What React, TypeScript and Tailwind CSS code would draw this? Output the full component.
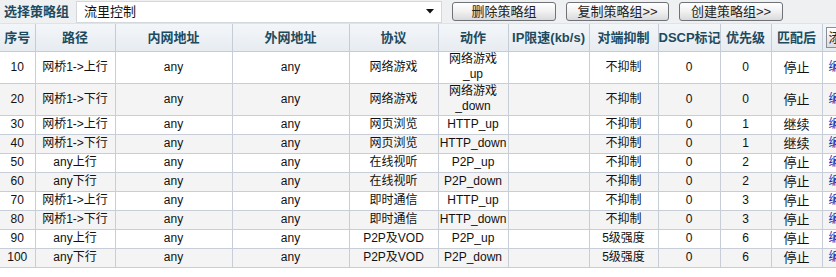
import React from "react";

type Row = {
  id: string;
  path: string;
  proto: string;
  action: string[];
  peer: string;
  dscp: string;
  pri: string;
  after: string;
};

const rows: Row[] = [
  { id: "10", path: "网桥1->上行", proto: "网络游戏", action: ["网络游戏", "_up"], peer: "不抑制", dscp: "0", pri: "0", after: "停止" },
  { id: "20", path: "网桥1->下行", proto: "网络游戏", action: ["网络游戏", "_down"], peer: "不抑制", dscp: "0", pri: "0", after: "停止" },
  { id: "30", path: "网桥1->上行", proto: "网页浏览", action: ["HTTP_up"], peer: "不抑制", dscp: "0", pri: "1", after: "继续" },
  { id: "40", path: "网桥1->下行", proto: "网页浏览", action: ["HTTP_down"], peer: "不抑制", dscp: "0", pri: "1", after: "继续" },
  { id: "50", path: "any上行", proto: "在线视听", action: ["P2P_up"], peer: "不抑制", dscp: "0", pri: "2", after: "停止" },
  { id: "60", path: "any下行", proto: "在线视听", action: ["P2P_down"], peer: "不抑制", dscp: "0", pri: "2", after: "停止" },
  { id: "70", path: "网桥1->上行", proto: "即时通信", action: ["HTTP_up"], peer: "不抑制", dscp: "0", pri: "3", after: "停止" },
  { id: "80", path: "网桥1->下行", proto: "即时通信", action: ["HTTP_down"], peer: "不抑制", dscp: "0", pri: "3", after: "停止" },
  { id: "90", path: "any上行", proto: "P2P及VOD", action: ["P2P_up"], peer: "5级强度", dscp: "0", pri: "6", after: "停止" },
  { id: "100", path: "any下行", proto: "P2P及VOD", action: ["P2P_down"], peer: "5级强度", dscp: "0", pri: "6", after: "停止" },
];

const widths = [35, 80, 117, 117, 89, 70, 81, 69, 62, 51, 51, 60];
const heads = ["序号", "路径", "内网地址", "外网地址", "协议", "动作", "IP限速(kb/s)", "对端抑制", "DSCP标记", "优先级", "匹配后"];

function Btn({ children, w }: { children: React.ReactNode; w: string }) {
  return (
    <button
      className={`${w} h-[19px] rounded-[3px] border border-[#6f7378] bg-gradient-to-b from-[#ffffff] via-[#f1f1f1] to-[#d9dadc] text-[13px] leading-[17px] text-[#222] text-center`}
    >
      {children}
    </button>
  );
}

export default function App() {
  const font = { fontFamily: '"Liberation Sans", "Noto Sans CJK SC", sans-serif' };
  return (
    <div className="w-[836px] h-[277px] overflow-hidden bg-white" style={font}>
      <div className="h-[24px] bg-[#eef0f2] border-b border-[#dfe3e7] flex items-center">
        <div className="w-[76px] pl-[4px] text-[13px] font-bold text-[#1e4a5e] leading-none">选择策略组</div>
        <div className="w-[366px] h-[22px] bg-white border border-[#d4d8dc] flex items-center justify-between pl-[7px] pr-[7px]">
          <span className="text-[13px] text-[#111] leading-none">流里控制</span>
          <svg width="8" height="5" viewBox="0 0 8 5">
            <path d="M0 0 L8 0 L4 4.5 Z" fill="#111" />
          </svg>
        </div>
        <div className="ml-[10px] flex gap-[10px] items-center">
          <Btn w="w-[104px]">删除策略组</Btn>
          <Btn w="w-[103px]">复制策略组&gt;&gt;</Btn>
          <Btn w="w-[104px]">创建策略组&gt;&gt;</Btn>
        </div>
      </div>
      <table className="border-collapse table-fixed w-[882px]">
        <colgroup>
          {widths.map((w, i) => (
            <col key={i} style={{ width: w }} />
          ))}
        </colgroup>
        <thead>
          <tr className="h-[27px] bg-gradient-to-b from-[#f3f6f9] to-[#e7ecf1]">
            {heads.map((h, i) => (
              <th
                key={h}
                className={`border-b border-[#c5ccd6] ${i > 0 ? "border-l" : ""} border-[#c5ccd6] text-[13px] font-bold text-[#1e4a5e] text-center p-0 whitespace-nowrap`}
              >
                {h}
              </th>
            ))}
            <th className="border-b border-l border-[#c5ccd6] text-left p-0 pl-[3px]">
              <span className="inline-block h-[21px] px-[2px] border border-[#8a8f96] bg-gradient-to-b from-white to-[#dcdde0] text-[13px] font-normal text-[#222] leading-[19px]">添加</span>
            </th>
          </tr>
        </thead>
        <tbody>
          {rows.map((r, idx) => {
            const tall = r.action.length > 1;
            const cell = `border-b border-l border-[#c8ced8] text-[12px] text-[#111] text-center p-0 whitespace-nowrap leading-[15px]`;
            return (
              <tr key={r.id} className={`${tall ? "h-[32px]" : "h-[19px]"} ${idx % 2 === 1 ? "bg-[#f4f4f4]" : "bg-white"}`}>
                <td className={`${cell} border-l-0`}>{r.id}</td>
                <td className={cell}>{r.path}</td>
                <td className={cell}>any</td>
                <td className={cell}>any</td>
                <td className={cell}>{r.proto}</td>
                <td className={cell}>
                  {r.action.map((a) => (
                    <div key={a}>{a}</div>
                  ))}
                </td>
                <td className={cell}></td>
                <td className={cell}>{r.peer}</td>
                <td className={cell}>{r.dscp}</td>
                <td className={cell}>{r.pri}</td>
                <td className={`${cell} text-[13px]`}>{r.after}</td>
                <td className={`${cell} text-left pl-[6px] text-[#2323a8]`}>编辑</td>
              </tr>
            );
          })}
        </tbody>
      </table>
    </div>
  );
}
